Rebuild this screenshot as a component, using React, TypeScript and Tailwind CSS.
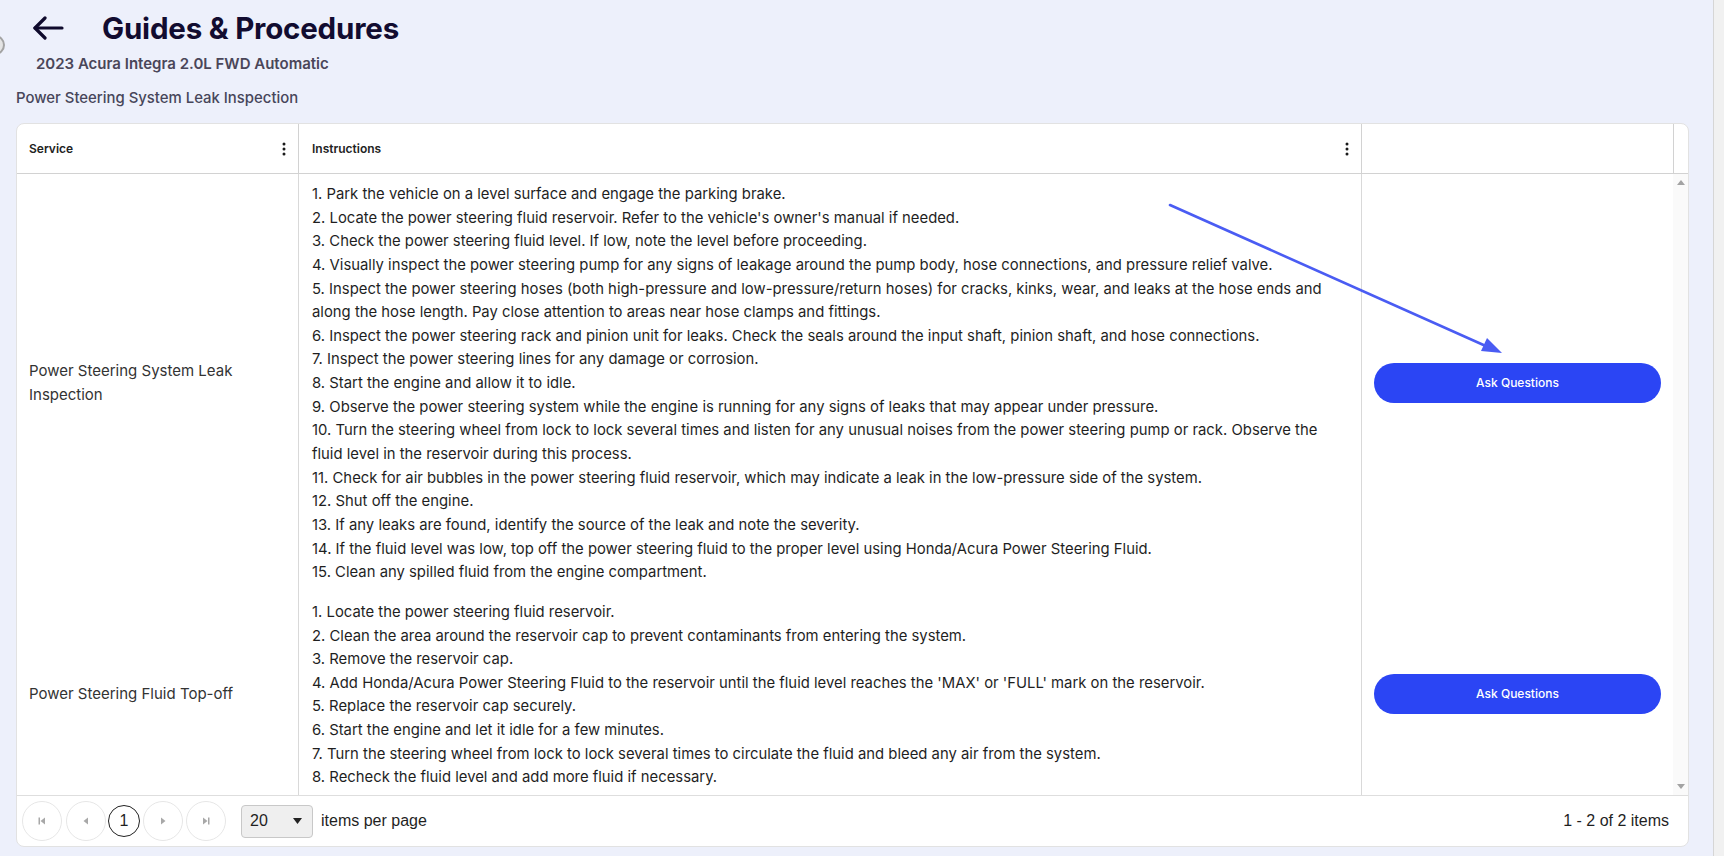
import React from 'react';

const leakSteps = [
  '1. Park the vehicle on a level surface and engage the parking brake.',
  "2. Locate the power steering fluid reservoir. Refer to the vehicle's owner's manual if needed.",
  '3. Check the power steering fluid level. If low, note the level before proceeding.',
  '4. Visually inspect the power steering pump for any signs of leakage around the pump body, hose connections, and pressure relief valve.',
  '5. Inspect the power steering hoses (both high-pressure and low-pressure/return hoses) for cracks, kinks, wear, and leaks at the hose ends and along the hose length. Pay close attention to areas near hose clamps and fittings.',
  '6. Inspect the power steering rack and pinion unit for leaks. Check the seals around the input shaft, pinion shaft, and hose connections.',
  '7. Inspect the power steering lines for any damage or corrosion.',
  '8. Start the engine and allow it to idle.',
  '9. Observe the power steering system while the engine is running for any signs of leaks that may appear under pressure.',
  '10. Turn the steering wheel from lock to lock several times and listen for any unusual noises from the power steering pump or rack. Observe the fluid level in the reservoir during this process.',
  '11. Check for air bubbles in the power steering fluid reservoir, which may indicate a leak in the low-pressure side of the system.',
  '12. Shut off the engine.',
  '13. If any leaks are found, identify the source of the leak and note the severity.',
  '14. If the fluid level was low, top off the power steering fluid to the proper level using Honda/Acura Power Steering Fluid.',
  '15. Clean any spilled fluid from the engine compartment.',
];

const topOffSteps = [
  '1. Locate the power steering fluid reservoir.',
  '2. Clean the area around the reservoir cap to prevent contaminants from entering the system.',
  '3. Remove the reservoir cap.',
  "4. Add Honda/Acura Power Steering Fluid to the reservoir until the fluid level reaches the 'MAX' or 'FULL' mark on the reservoir.",
  '5. Replace the reservoir cap securely.',
  '6. Start the engine and let it idle for a few minutes.',
  '7. Turn the steering wheel from lock to lock several times to circulate the fluid and bleed any air from the system.',
  '8. Recheck the fluid level and add more fluid if necessary.',
];

const services = [
  { name: 'Power Steering System Leak Inspection', steps: leakSteps },
  { name: 'Power Steering Fluid Top-off', steps: topOffSteps },
];

const Kebab = () => (
  <svg width="4" height="14" viewBox="0 0 4 14" className="text-[#1a1a1a]">
    <circle cx="2" cy="2" r="1.5" fill="currentColor" />
    <circle cx="2" cy="7" r="1.5" fill="currentColor" />
    <circle cx="2" cy="12" r="1.5" fill="currentColor" />
  </svg>
);

const PagerIcon = ({ kind }: { kind: 'first' | 'prev' | 'next' | 'last' }) => (
  <svg width="10" height="10" viewBox="0 0 10 10" className="text-[#a8a8a8]">
    {kind === 'first' && (
      <>
        <rect x="1.5" y="1.5" width="1.5" height="7" fill="currentColor" />
        <polygon points="8,1.5 3.5,5 8,8.5" fill="currentColor" />
      </>
    )}
    {kind === 'prev' && <polygon points="7,1.5 2.5,5 7,8.5" fill="currentColor" />}
    {kind === 'next' && <polygon points="3,1.5 7.5,5 3,8.5" fill="currentColor" />}
    {kind === 'last' && (
      <>
        <polygon points="2,1.5 6.5,5 2,8.5" fill="currentColor" />
        <rect x="7" y="1.5" width="1.5" height="7" fill="currentColor" />
      </>
    )}
  </svg>
);

const PagerButton = ({ kind }: { kind: 'first' | 'prev' | 'next' | 'last' }) => (
  <button className="w-10 h-10 rounded-full border border-[#e6e6e6] bg-white flex items-center justify-center">
    <PagerIcon kind={kind} />
  </button>
);

export default function App() {
  return (
    <div className="relative flex h-[856px] w-full overflow-hidden bg-[#edf0fb] font-['Inter',sans-serif]">
      {/* collapsed sidebar toggle peeking from the left */}
      <div className="absolute -left-[15px] top-[35px] w-5 h-5 rounded-full border-2 border-[#a3a3a3] bg-[#e4e4e4]" />

      <div className="flex-1 flex flex-col pl-4 pr-6">
        {/* Header */}
        <div className="flex items-center h-[36px] mt-[10px] pl-4">
          <svg width="32" height="24" viewBox="0 0 32 24" fill="none" stroke="#0f0a2c" strokeWidth="3.2" strokeLinecap="round" strokeLinejoin="round">
            <path d="M30 12H3" />
            <path d="M13 2L3 12l10 10" />
          </svg>
          <h1 className="ml-[38px] text-[29.5px] font-bold leading-[36px] tracking-[-0.2px] text-[#120c30]">Guides &amp; Procedures</h1>
        </div>
        <div className="pl-5 mt-[8px] text-[15px] font-semibold leading-5 text-[#4a4659]">2023 Acura Integra 2.0L FWD Automatic</div>
        <div className="mt-[14px] text-[14.9px] font-medium leading-5 text-[#47465a]">Power Steering System Leak Inspection</div>

        {/* Grid card */}
        <div className="mt-[15px] flex flex-col h-[724px] rounded-lg border border-[#e2e2e2] bg-white overflow-hidden">
          <div className="flex h-[50px] shrink-0 border-b border-[#d2d2d2] text-[12px] font-semibold text-[#222]">
            <div className="w-[282px] flex items-center justify-between pl-3 pr-[12px] border-r border-[#d2d2d2]">
              <span>Service</span>
              <Kebab />
            </div>
            <div className="w-[1063px] flex items-center justify-between pl-[13px] pr-3 border-r border-[#d2d2d2]">
              <span>Instructions</span>
              <Kebab />
            </div>
            <div className="w-[312px] border-r border-[#d2d2d2]" />
            <div className="flex-1" />
          </div>

          <div className="flex flex-1 min-h-0">
            <div className="flex-1 overflow-hidden">
              {services.map((s) => (
                <div key={s.name} className="flex">
                  <div className="w-[282px] shrink-0 flex items-center px-3 border-r border-[#d9d9d9] text-[15px] leading-6 text-[#333]">
                    {s.name}
                  </div>
                  <div className="w-[1063px] shrink-0 pt-[9px] pb-[7px] pl-[13px] pr-3 border-r border-[#d9d9d9] text-[14.85px] leading-[23.64px] text-[#1f1f1f]">
                    {s.steps.map((step) => (
                      <div key={step}>{step}</div>
                    ))}
                  </div>
                  <div className="flex-1 flex items-center px-3">
                    <button className="w-full h-10 rounded-full bg-[#2b45f4] text-white text-[12px] font-medium">
                      Ask Questions
                    </button>
                  </div>
                </div>
              ))}
            </div>
            <div className="w-[15px] bg-[#fafafa] flex flex-col items-center justify-between py-[6px]">
              <svg width="8" height="5" viewBox="0 0 8 5"><polygon points="0,5 4,0 8,5" fill="#a3a3a3" /></svg>
              <svg width="8" height="5" viewBox="0 0 8 5"><polygon points="0,0 8,0 4,5" fill="#a3a3a3" /></svg>
            </div>
          </div>

          {/* Pager */}
          <div className="flex h-[51px] shrink-0 items-center justify-between border-t border-[#dedede] pl-[5px] pr-[19px] font-['Liberation_Sans',Arial,sans-serif] text-[16px] text-[#1f1f1f]">
            <div className="flex items-center">
              <PagerButton kind="first" />
              <div className="w-1" />
              <PagerButton kind="prev" />
              <div className="w-[2px]" />
              <button className="w-8 h-8 rounded-full border border-[#222] bg-white flex items-center justify-center text-[16px]">1</button>
              <div className="w-[3px]" />
              <PagerButton kind="next" />
              <div className="w-[3px]" />
              <PagerButton kind="last" />
              <div className="ml-[15px] flex items-center justify-between w-[72px] h-[33px] rounded border border-[#c8c8c8] bg-[#efefef] pl-[8px] pr-[10px]">
                <span>20</span>
                <svg width="9" height="6" viewBox="0 0 9 6"><polygon points="0,0 9,0 4.5,6" fill="#222" /></svg>
              </div>
              <span className="ml-2">items per page</span>
            </div>
            <span>1 - 2 of 2 items</span>
          </div>
        </div>
      </div>

      {/* page scrollbar track */}
      <div className="w-[11px] border-l border-[#d6d6d6] bg-[#f1f1f1]" />

      {/* annotation arrow */}
      <svg className="absolute left-0 top-0 pointer-events-none" width="1724" height="856">
        <line x1="1170" y1="205" x2="1488" y2="347" stroke="#4a5cf3" strokeWidth="2.6" strokeLinecap="round" />
        <polygon points="1502,353 1481,351 1487,338" fill="#4a5cf3" />
      </svg>
    </div>
  );
}
